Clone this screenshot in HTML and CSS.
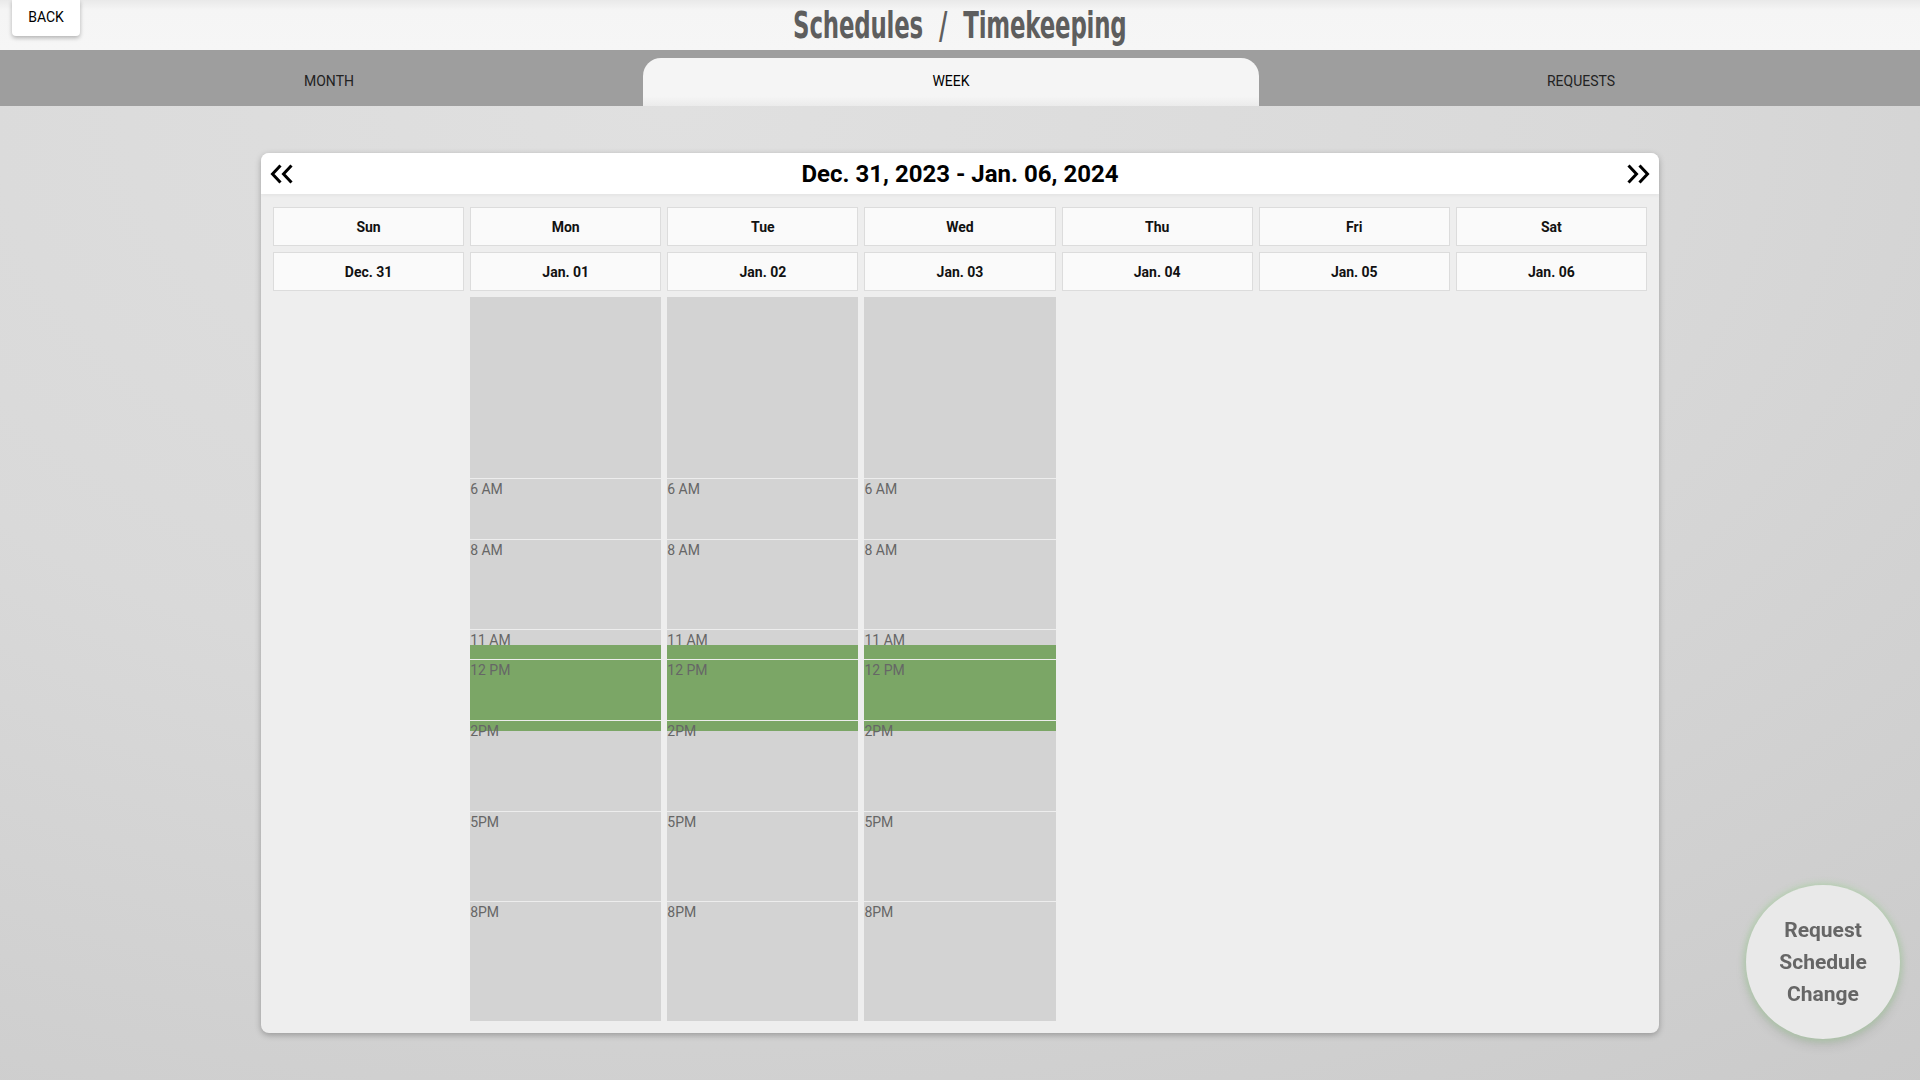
FILE: index.html
```html
<!DOCTYPE html>
<html lang="en">
<head>
<meta charset="utf-8">
<title>Schedules / Timekeeping</title>
<link rel="stylesheet" href="styles.css">
</head>
<body>
<header class="topbar">
  <div class="topbar-left"><button class="back-btn">BACK</button></div>
  <h1 class="page-title"><span>Schedules</span><span>/</span><span>Timekeeping</span></h1>
  <div class="topbar-right"></div>
</header>
<nav class="tabs">
  <div class="tab">MONTH</div>
  <div class="tab active">WEEK</div>
  <div class="tab">REQUESTS</div>
</nav>
<main class="content">
  <section class="card">
    <div class="card-head">
      <button class="nav-btn" aria-label="Previous week">
        <svg width="24" height="20" viewBox="0 0 24 20"><polyline points="10.5,1.5 2.5,10 10.5,18.5" fill="none" stroke="#000" stroke-width="3"/><polyline points="21.5,1.5 13.5,10 21.5,18.5" fill="none" stroke="#000" stroke-width="3"/></svg>
      </button>
      <div class="range">Dec. 31, 2023 - Jan. 06, 2024</div>
      <button class="nav-btn" aria-label="Next week">
        <svg width="24" height="20" viewBox="0 0 24 20"><polyline points="2.5,1.5 10.5,10 2.5,18.5" fill="none" stroke="#000" stroke-width="3"/><polyline points="13.5,1.5 21.5,10 13.5,18.5" fill="none" stroke="#000" stroke-width="3"/></svg>
      </button>
    </div>
    <div class="card-body">
      <div class="week-row">
        <div class="cell">Sun</div><div class="cell">Mon</div><div class="cell">Tue</div><div class="cell">Wed</div><div class="cell">Thu</div><div class="cell">Fri</div><div class="cell">Sat</div>
      </div>
      <div class="week-row">
        <div class="cell">Dec. 31</div><div class="cell">Jan. 01</div><div class="cell">Jan. 02</div><div class="cell">Jan. 03</div><div class="cell">Jan. 04</div><div class="cell">Jan. 05</div><div class="cell">Jan. 06</div>
      </div>
      <div class="week-row days">
        <div class="day empty"></div>
        <div class="day">
          <div class="seg s0"></div>
          <div class="seg s2 line"><span>6 AM</span></div>
          <div class="seg s3 line"><span>8 AM</span></div>
          <div class="seg s1 line"><span>11 AM</span></div>
          <div class="shift"></div>
          <div class="seg s2 line"><span>12 PM</span></div>
          <div class="seg s3 line"><span>2PM</span></div>
          <div class="seg s3 line"><span>5PM</span></div>
          <div class="seg s4 line"><span>8PM</span></div>
        </div>
        <div class="day">
          <div class="seg s0"></div>
          <div class="seg s2 line"><span>6 AM</span></div>
          <div class="seg s3 line"><span>8 AM</span></div>
          <div class="seg s1 line"><span>11 AM</span></div>
          <div class="shift"></div>
          <div class="seg s2 line"><span>12 PM</span></div>
          <div class="seg s3 line"><span>2PM</span></div>
          <div class="seg s3 line"><span>5PM</span></div>
          <div class="seg s4 line"><span>8PM</span></div>
        </div>
        <div class="day">
          <div class="seg s0"></div>
          <div class="seg s2 line"><span>6 AM</span></div>
          <div class="seg s3 line"><span>8 AM</span></div>
          <div class="seg s1 line"><span>11 AM</span></div>
          <div class="shift"></div>
          <div class="seg s2 line"><span>12 PM</span></div>
          <div class="seg s3 line"><span>2PM</span></div>
          <div class="seg s3 line"><span>5PM</span></div>
          <div class="seg s4 line"><span>8PM</span></div>
        </div>
        <div class="day empty"></div>
        <div class="day empty"></div>
        <div class="day empty"></div>
      </div>
    </div>
  </section>
</main>
<button class="fab">Request<br>Schedule<br>Change</button>
</body>
</html>
```
FILE: styles.css
```css
* { box-sizing: border-box; }
html, body { margin: 0; padding: 0; }
body {
  min-height: 100vh;
  font-family: Roboto, "Liberation Sans", Arial, sans-serif;
  background: radial-gradient(ellipse 110% 120% at 35% 10%, #e0e0e0 0%, #d9d9d9 45%, #c9c9c9 100%);
  overflow: hidden;
}
button { font-family: inherit; border: none; cursor: pointer; }

.topbar {
  height: 50px;
  display: grid;
  grid-template-columns: 1fr auto 1fr;
  align-items: start;
  background: linear-gradient(#e9e9e9 0px, #f5f5f5 10px, #f6f6f6 100%);
}
.topbar-left { padding-left: 12px; }
.back-btn {
  width: 68px;
  height: 36px;
  background: #fff;
  color: #000;
  font-size: 14px;
  border-radius: 0 0 4px 4px;
  box-shadow: 0 2px 4px rgba(0,0,0,0.28);
  padding: 0;
  padding-bottom: 2px;
}
.page-title {
  margin: 0;
  display: flex;
  gap: 24px;
  font-family: "DejaVu Sans Condensed", "Liberation Sans", sans-serif;
  font-weight: 700;
  font-size: 38px;
  line-height: 50px;
  padding-bottom: 4px;
  color: #5e5e5e;
  transform: scaleX(0.67);
  letter-spacing: -0.3px;
}

.tabs {
  height: 56px;
  background: #9e9e9e;
  display: grid;
  grid-template-columns: 628px 616px 1fr;
  padding: 0 17px 0 15px;
  align-items: end;
}
.tab {
  height: 48px;
  display: flex;
  align-items: center;
  justify-content: center;
  font-size: 14px;
  color: #222;
  padding-bottom: 2px;
}
.tab.active {
  background: linear-gradient(#f5f5f5 80%, #ebebeb 100%);
  border-radius: 18px 18px 0 0;
  color: #000;
}

.content {
  display: flex;
  justify-content: center;
  padding-top: 47px;
}
.card {
  width: 1398px;
  border-radius: 8px;
  background: #eeeeee;
  box-shadow: 0 2px 6px rgba(0,0,0,0.28);
  overflow: hidden;
}
.card-head {
  height: 41px;
  background: #fff;
  display: flex;
  align-items: center;
  justify-content: space-between;
  padding: 0 9px;
  box-shadow: 0 2px 3px rgba(0,0,0,0.04);
}
.nav-btn {
  background: transparent;
  padding: 0;
  width: 24px;
  height: 20px;
  display: flex;
}
.range {
  font-size: 24px;
  font-weight: 700;
  color: #000;
}
.card-body {
  padding: 13px 12px 12px;
  display: flex;
  flex-direction: column;
  gap: 6px;
}
.week-row {
  display: grid;
  grid-template-columns: repeat(7, 1fr);
  gap: 6px;
}
.cell {
  height: 39px;
  background: #fafafa;
  border: 1px solid #dcdcdc;
  display: flex;
  align-items: center;
  justify-content: center;
  font-size: 14px;
  font-weight: 700;
  color: #111;
}
.days { height: 724px; }
.day {
  position: relative;
  background: #d3d3d3;
  display: flex;
  flex-direction: column;
}
.day.empty { background: transparent; }
.seg {
  position: relative;
  font-size: 14px;
  color: #666;
  line-height: 17px;
  padding-top: 2px;
}
.seg.line { border-top: 1px solid #ededed; }
.s0 { height: 181px; }
.s1 { height: 30px; }
.s2 { height: 61px; }
.s3 { height: 90px; }
.s4 { height: 120px; }
.day .seg:nth-of-type(7) { height: 91px; }
.shift {
  position: absolute;
  left: 0;
  right: 0;
  top: 348px;
  height: 86px;
  background: #7ba666;
}

.fab {
  position: fixed;
  right: 20px;
  bottom: 41px;
  width: 154px;
  height: 154px;
  border-radius: 50%;
  background: #e9e9e9;
  color: #666;
  font-size: 21px;
  font-weight: 700;
  line-height: 32px;
  box-shadow: 0 0 6px 2px rgba(150, 210, 140, 0.45), 0 6px 12px rgba(0,0,0,0.12);
  padding: 0;
}
```
